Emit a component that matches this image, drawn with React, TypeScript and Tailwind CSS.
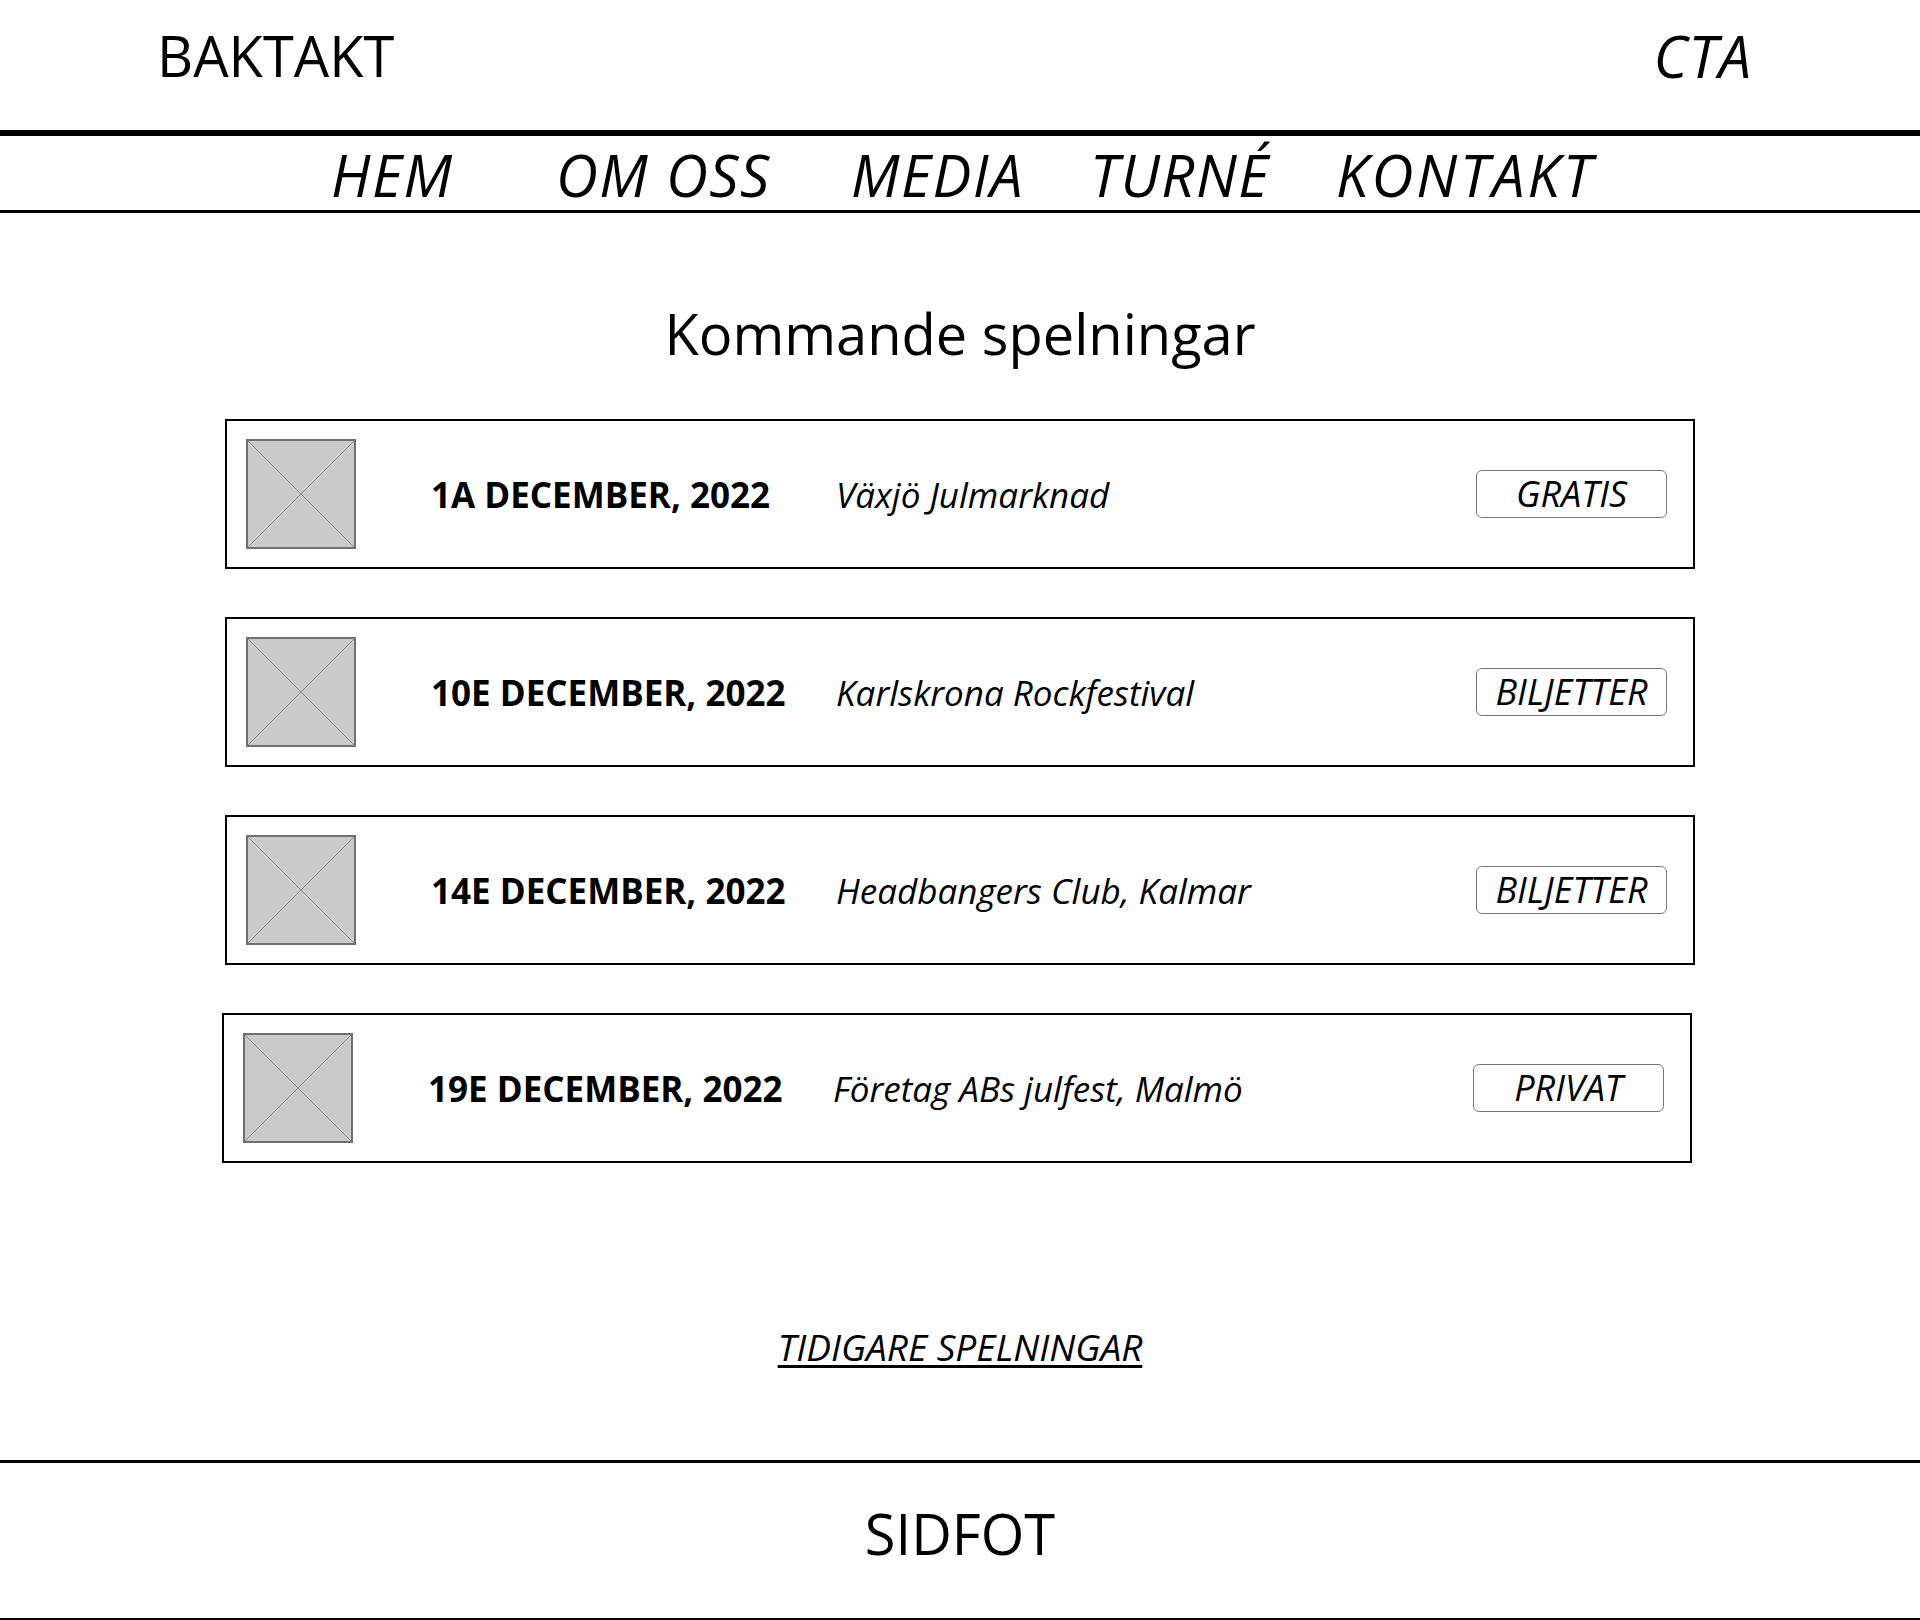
import React from 'react';

interface Gig {
    date: string;
    venue: string;
    action: string;
    shift?: boolean;
}

const gigs: Gig[] = [
    { date: '1A DECEMBER, 2022', venue: 'Växjö Julmarknad', action: 'GRATIS' },
    { date: '10E DECEMBER, 2022', venue: 'Karlskrona Rockfestival', action: 'BILJETTER' },
    { date: '14E DECEMBER, 2022', venue: 'Headbangers Club, Kalmar', action: 'BILJETTER' },
    { date: '19E DECEMBER, 2022', venue: 'Företag ABs julfest, Malmö', action: 'PRIVAT', shift: true },
];

const Placeholder: React.FC = () => (
    <svg width="110" height="110" viewBox="0 0 110 110" className="shrink-0">
        <rect x="1" y="1" width="108" height="108" fill="#cacaca" stroke="#6f6f6f" strokeWidth="2" />
        <line x1="1" y1="1" x2="109" y2="109" stroke="#7a7a7a" strokeWidth="0.8" />
        <line x1="109" y1="1" x2="1" y2="109" stroke="#7a7a7a" strokeWidth="0.8" />
    </svg>
);

const GigCard: React.FC<{ gig: Gig }> = ({ gig }) => (
    <div
        className={
            'w-[1470px] h-[150px] border-2 border-black flex items-center pl-[19px] pr-[26px] ' +
            (gig.shift ? 'ml-[-3px]' : '')
        }
    >
        <Placeholder />
        <span className="ml-[75px] w-[405px] shrink-0 text-[35px] leading-none font-bold">{gig.date}</span>
        <span className="flex-1 text-[35px] leading-none italic">{gig.venue}</span>
        <div className="w-[191px] h-[48px] rounded-md border border-[#777] flex items-center justify-center text-[36px] leading-none italic">
            {gig.action}
        </div>
    </div>
);

export default function App() {
    return (
        <div className="w-[1920px] h-[1620px] bg-white text-black font-['Open_Sans',sans-serif] flex flex-col">
            <header className="h-[136px] border-b-[6px] border-black flex justify-between items-start pt-[27px] pl-[157px] pr-[168px]">
                <span className="text-[56px] leading-none">BAKTAKT</span>
                <span className="text-[58px] leading-none italic tracking-[1px]">CTA</span>
            </header>

            <nav className="h-[77px] border-b-[3px] border-black flex pt-[10px] pl-[331px] text-[58px] leading-none italic tracking-[1.5px]">
                <span className="w-[225px]">HEM</span>
                <span className="w-[295px]">OM OSS</span>
                <span className="w-[239px]">MEDIA</span>
                <span className="w-[246px]">TURNÉ</span>
                <span className="tracking-[3px]">KONTAKT</span>
            </nav>

            <main className="flex-1 flex flex-col">
                <h1 className="mt-[92px] text-center text-[56px] leading-none">Kommande spelningar</h1>

                <div className="mt-[58px] pl-[225px] flex flex-col gap-[48px]">
                    {gigs.map((gig) => (
                        <GigCard key={gig.date} gig={gig} />
                    ))}
                </div>

                <div className="mt-[165px] text-center">
                    <a className="text-[37px] leading-none italic underline underline-offset-[4px]">TIDIGARE SPELNINGAR</a>
                </div>
            </main>

            <footer className="h-[160px] border-t-[3px] border-b-2 border-black flex justify-center pt-[42px]">
                <span className="text-[56px] leading-none">SIDFOT</span>
            </footer>
        </div>
    );
}
